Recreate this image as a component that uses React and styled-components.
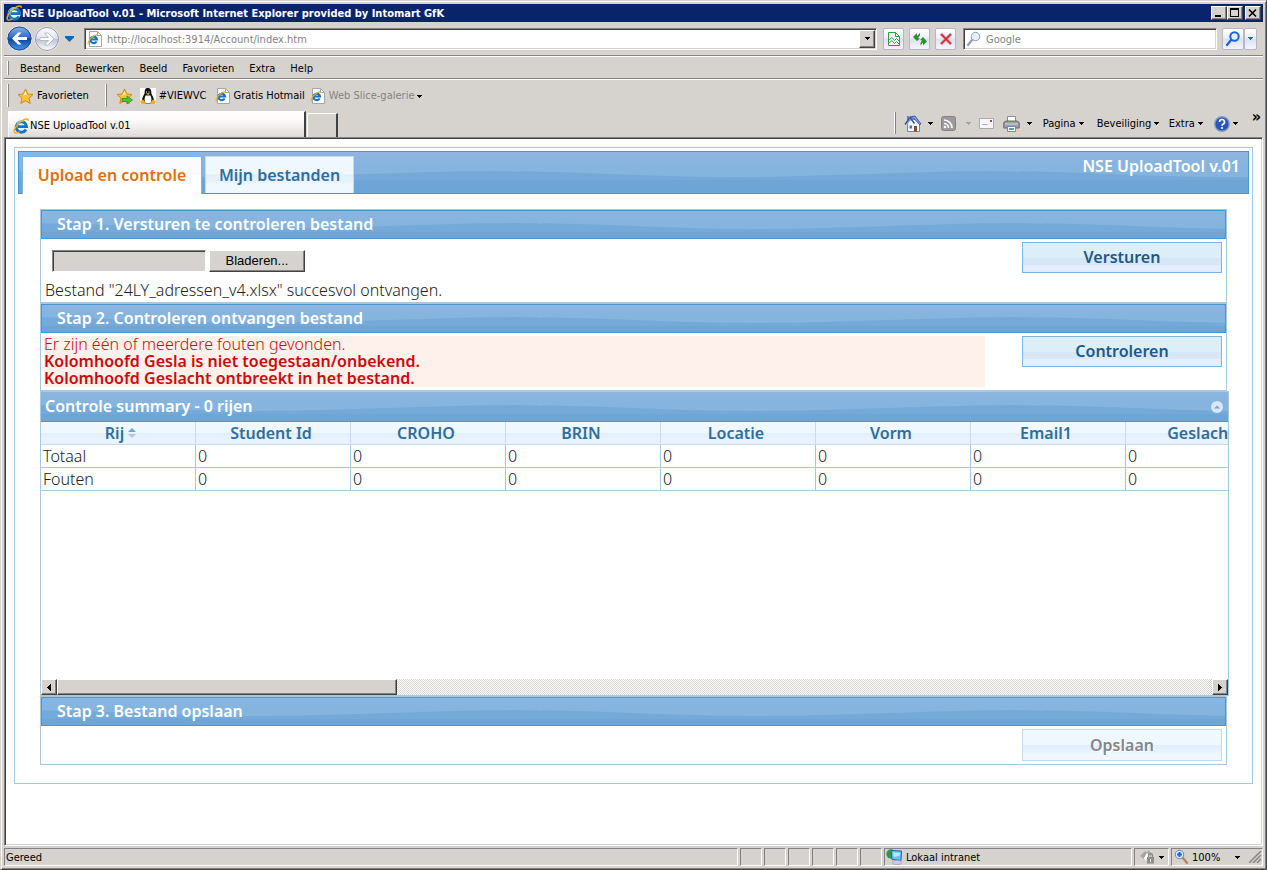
import React, { useState } from "react"
import styled, { createGlobalStyle, css } from "styled-components"

const colors = {
  face: '#d6d3ce',
  shadow: '#848284',
  dark: '#424142',
  title: '#08246b',
  muted: '#848284',
  line: '#a6c9e2',
  header: '#4297d7',
  tabLine: '#c5dbec',
  link: '#2e6e9e',
  active: '#e17009',
  error: '#cd0a0a',
  errorBg: '#fef1ec',
}

const uiFont = '"DejaVu Sans Condensed", "Noto Sans", sans-serif'
const pageFont = '"Noto Sans", "Open Sans", sans-serif'

const waveSvg = `<svg xmlns='http://www.w3.org/2000/svg' width='500' height='60'><path d='M-26 28C60 28 130 34 215 34S390 28 474 28Q490 28 500 29V60H-26Z' fill='%2375aad8'/><path d='M0 37h500v23H0z' fill='%236ca5d6'/></svg>`

const wave = css`
  background:
    url("data:image/svg+xml,${waveSvg}") 0 50% repeat-x,
    linear-gradient(#8fb4df, #85b5de 30%);
`

const raised = css`
  background: ${colors.face};
  border: 1px solid;
  border-color: #fff ${colors.dark} ${colors.dark} #fff;
  box-shadow: inset -1px -1px ${colors.shadow};
`

const sunken = css`
  border: 1px solid;
  border-color: ${colors.shadow} #fff #fff ${colors.shadow};
  box-shadow: inset 1px 1px ${colors.dark}, inset -1px -1px ${colors.face};
`

const GlobalStyle = createGlobalStyle`
  * {
    box-sizing: border-box;
  }
  body {
    margin: 0;
    background: ${colors.face};
  }
  button, input {
    font: inherit;
    color: inherit;
    border-radius: 0;
  }
  button {
    padding: 0;
    border: 0;
    background: none;
  }
  svg {
    display: block;
    flex: none;
  }
`

/* ---------- window ---------- */

const Window = styled.div`
  display: flex;
  flex-direction: column;
  min-height: 100vh;
  padding: 3px;
  font: 11px/14px ${uiFont};
  color: #000;
  background: ${colors.face};
  border: 1px solid;
  border-color: ${colors.face} ${colors.dark} ${colors.dark} ${colors.face};
  box-shadow: inset 1px 1px #fff, inset -1px -1px ${colors.shadow};
`

const TitleBar = styled.header`
  display: flex;
  align-items: center;
  height: 18px;
  padding: 0 2px;
  background: ${colors.title};
  color: #fff;
`

const Title = styled.h1`
  flex: 1;
  margin: 0;
  padding-top: 2px;
  font: bold 11px/14px ${uiFont};
  white-space: nowrap;
`

const WindowButton = styled.button`
  ${raised};
  display: flex;
  align-items: center;
  justify-content: center;
  width: 16px;
  height: 14px;
  margin-left: ${props => props.$apart ? '2px' : 0};
`

const NavRow = styled.div`
  display: flex;
  align-items: center;
  height: 34px;
  padding: 0 6px 0 2px;
  border-bottom: 1px solid ${colors.shadow};
`

const PlainButton = styled.button`
  display: flex;
  align-items: center;
  justify-content: center;
  width: ${props => props.$width}px;
  height: 22px;
`

const Travel = styled.div`
  display: flex;
  align-items: center;
  width: 78px;
`

const Field = styled.label`
  ${sunken};
  display: flex;
  align-items: center;
  height: 22px;
  padding: 0 1px 0 2px;
  gap: 4px;
  background: #fff;
  color: ${colors.muted};
  flex: ${props => props.$width ? `0 0 ${props.$width}px` : 1};

  input {
    flex: 1;
    min-width: 0;
    padding: 2px 0 0;
    border: 0;
    outline: 0;
    background: none;
  }
`

const DropButton = styled.button`
  ${raised};
  display: flex;
  align-items: center;
  justify-content: center;
  width: 16px;
  height: 18px;
`

const NavButtons = styled.div`
  display: flex;
  gap: 5px;
  margin: 0 7px 0 6px;
`

const GlossButton = styled.button`
  display: flex;
  align-items: center;
  justify-content: center;
  width: ${props => props.$width}px;
  height: 22px;
  border: 1px solid #b5b6ce;
  border-radius: 2px;
  background: linear-gradient(#fff, #eef0fa 45%, #dde0f0 50%, #f4f5fc);

  & + &[data-joined] {
    border-left: 0;
  }
`

const SearchGo = styled.div`
  display: flex;
  margin-left: 5px;
`

const MenuBar = styled.nav`
  display: flex;
  align-items: center;
  height: 23px;
  padding: 2px 3px 0;
  gap: 15px;
  border-top: 1px solid #fff;
  border-bottom: 1px solid ${colors.shadow};
`

const MenuItem = styled.button`
  white-space: nowrap;
`

const Grip = styled.span`
  align-self: stretch;
  width: 2px;
  margin: 2px ${props => props.$space}px 3px 0;
  border-right: 1px solid ${colors.shadow};
  border-left: 1px solid #fff;
`

const FavoritesBar = styled.div`
  display: flex;
  align-items: center;
  height: 31px;
  padding: 2px 3px 0;
  border-top: 1px solid #fff;
`

const ToolLink = styled.a`
  display: flex;
  align-items: center;
  gap: ${props => props.$gap || 3}px;
  margin-right: ${props => props.$space || 8}px;
  color: ${props => props.$muted ? colors.muted : '#000'};
  text-decoration: none;
  white-space: nowrap;
`

const TabRow = styled.div`
  display: flex;
  align-items: flex-end;
  height: 27px;
  padding-left: 4px;
`

const BrowserTab = styled.button`
  display: flex;
  align-items: center;
  gap: 1px;
  width: 298px;
  height: 26px;
  padding: 2px 0 0 4px;
  border: solid;
  border-width: 1px 2px 0 1px;
  border-color: #fff ${colors.dark} #fff #fff;
  background: linear-gradient(#fff, #fbf7f7 40%, #dedad7);
`

const NewTab = styled.button`
  width: 31px;
  height: 24px;
  margin-left: 1px;
  border: solid;
  border-width: 1px 2px 0 1px;
  border-color: #fff ${colors.dark} #fff #fff;
`

const CommandBar = styled.div`
  display: flex;
  align-items: center;
  align-self: stretch;
  margin-left: auto;
  padding-right: 2px;
`

const Command = styled.button`
  display: flex;
  align-items: center;
  justify-content: ${props => props.$label ? 'flex-start' : 'space-between'};
  gap: 3px;
  width: ${props => props.$width}px;
  margin-right: ${props => props.$space}px;
  white-space: nowrap;
`

const More = styled.button`
  align-self: flex-start;
  font-size: 16px;
  font-weight: bold;
`

/* ---------- page ---------- */

const Viewport = styled.main`
  flex: 1;
  padding: 9px;
  background: #fff;
  border: 1px solid;
  border-color: ${colors.shadow} #fff #fff ${colors.shadow};
  box-shadow: inset 1px 1px ${colors.dark}, inset -1px -1px ${colors.face};
`

const Page = styled.div`
  padding: 3px 3px 18px;
  border: 1px solid ${colors.line};
  font: 300 16px/17px ${pageFont};
  color: #222;

  b {
    font-weight: 600;
  }
`

const PageHeader = styled.div`
  ${wave};
  display: flex;
  height: 43px;
  padding: 4px 8px 0 3px;
  gap: 3px;
  border: 1px solid ${colors.header};
`

const PageTab = styled.button`
  width: ${props => props.$width}px;
  height: ${props => props.$active ? 38 : 37}px;
  border: 1px solid ${props => props.$active ? '#79b7e7' : colors.tabLine};
  border-bottom: 0;
  background: ${props => props.$active
    ? 'linear-gradient(#fafaff 50%, #fff 50%)'
    : 'linear-gradient(#eff7ff 48%, #e2eefd 49%, #e8f3ff 70%, #f0f8ff 75%)'};
  color: ${props => props.$active ? colors.active : colors.link};
  font-weight: 600;
  white-space: nowrap;
`

const AppName = styled.div`
  margin-left: auto;
  padding-top: 2px;
  color: #fff;
  font-weight: 600;
`

const Steps = styled.div`
  margin: 15px 22px 0;
`

const Section = styled.section`
  border: 1px solid ${colors.line};
`

const StepTitle = styled.h2`
  ${wave};
  margin: 0;
  padding: 5px 15px;
  border: 1px solid ${colors.header};
  color: #fff;
  font: 600 16px/17px ${pageFont};
`

const StepBody = styled.div`
  display: grid;
  grid-template-columns: 1fr 200px;
  align-items: start;
  column-gap: 37px;
  min-height: ${props => props.$height}px;
  padding: 3px 4px 3px 3px;
`

const ActionButton = styled.button`
  height: 31px;
  border: 1px solid #79b7e7;
  background: linear-gradient(#dceef8 52%, #d6e6f6 53%, #d9e8f8 74%, #e4eefd 76%);
  color: #1d5987;
  font-weight: 600;

  &:disabled {
    height: 32px;
    border-color: ${colors.tabLine};
    background: linear-gradient(#eff7ff 50%, #e2edfd 51%, #e8f3ff 74%, #eff7ff 76%);
    color: #848689;
    text-shadow: 1px 1px #fff;
  }
`

const FilePicker = styled.div`
  display: flex;
  gap: 3px;
  margin: 8px 0 10px 8px;

  input {
    ${sunken};
    width: 154px;
    height: 22px;
    background: ${colors.face};
  }

  button {
    ${raised};
    width: 96px;
    height: 22px;
    color: #000;
    font: 13px/16px "Liberation Sans", sans-serif;
  }
`

const Status = styled.p`
  margin: 0 0 0 1px;
`

const Errors = styled.div`
  background: ${colors.errorBg};
  color: ${colors.error};

  p {
    margin: 0;
  }
`

const Grid = styled.div`
  margin-right: -2px;
  border: 1px solid ${colors.line};
`

const GridTitle = styled.div`
  ${wave};
  display: flex;
  align-items: center;
  justify-content: space-between;
  height: 30px;
  padding: 0 5px 0 4px;
  border-bottom: 1px solid ${colors.header};
  color: #fff;
  font-weight: 600;
`

const GridBody = styled.div`
  height: 257px;
  overflow: hidden;
`

const Table = styled.table`
  table-layout: fixed;
  width: ${props => props.$columns * 155}px;
  border-collapse: separate;
  border-spacing: 0;

  th {
    height: 23px;
    padding: 0 4px 0 0;
    border: solid ${colors.tabLine};
    border-width: 0 1px 1px 0;
    background: linear-gradient(#eff7ff 48%, #e0edfd 49%, #e8f3ff 72%);
    color: ${colors.link};
    font-weight: 600;
  }

  td {
    height: 23px;
    padding: 0 2px;
    border: solid ${colors.line};
    border-width: 0 1px 1px 0;
  }
`

const Sortable = styled.span`
  display: inline-flex;
  align-items: center;
  gap: 4px;
  padding-left: 9px;
`

const ScrollBar = styled.div`
  display: flex;
  height: 16px;
  background: repeating-conic-gradient(#fff 0 25%, ${colors.face} 0 50%) 0 0 / 2px 2px;

  button {
    ${raised};
    display: flex;
    align-items: center;
    justify-content: center;
    width: 16px;
  }
`

const Thumb = styled.div`
  ${raised};
  width: 340px;
  margin-right: auto;
`

/* ---------- status bar ---------- */

const StatusBar = styled.footer`
  display: flex;
  gap: 2px;
  height: 20px;
  padding-top: 2px;
`

const Cell = styled.div`
  display: flex;
  align-items: center;
  flex: ${props => props.$width ? `0 0 ${props.$width}px` : 1};
  padding: ${props => props.$pad ? '0 4px' : '0 1px'};
  gap: 3px;
  justify-content: ${props => props.$spread ? 'space-between' : 'flex-start'};
  border: 1px solid;
  border-color: ${colors.shadow} #fff #fff ${colors.shadow};
  white-space: nowrap;
`

const CellText = styled.span`
  flex: 1;
  padding-top: 2px;
`

/* ---------- icons ---------- */

const Arrow = ({ color = '#000', size = 5 }) => (
  <svg width={size} height="3" viewBox="0 0 5 3" preserveAspectRatio="none" shapeRendering="crispEdges">
    <path d="M0 0h5L2.5 3z" fill={color} />
  </svg>
)

const Explorer = () => (
  <svg width="16" height="16" viewBox="0 0 16 16" fill="none">
    <circle cx="8.200" cy="8.500" r="6.500" fill="#eaf6ff" />
    <path d="M13 11.500A5.200 5.200 0 1 1 13.600 8.600H5" stroke="#1173c7" strokeWidth="2.800" />
    <path d="M4 6.500A4.500 4.500 0 0 1 10.500 3.500" stroke="#7dd0fa" strokeWidth="1.200" />
    <path d="M2 15C-.5 13 3 7 8 3.500 12 .8 15.500 0 15.300 2.800M2 15c1.500.5 3-.3 4.500-1.200" stroke="#efaa1c" strokeWidth="1.500" />
  </svg>
)

const ExplorerPage = () => (
  <svg width="16" height="16" viewBox="0 0 16 16" fill="none">
    <path d="M2.500.5h8l4 4v11h-12z" fill="#fff" stroke="#a4a5ad" />
    <path d="M10.500.5v4h4" stroke="#a4a5ad" />
    <path d="M9.600 10.500A3.300 3.300 0 1 1 10 8.500H4.500" stroke="#1173c7" strokeWidth="2.200" />
    <path d="M1.500 13.500C0 12 3 7.500 6 5.500 9 3.500 11 3.500 10.500 5" stroke="#efaa1c" strokeWidth="1.200" />
  </svg>
)

const BackIcon = () => (
  <svg width="27" height="27" viewBox="0 0 27 27">
    <defs>
      <linearGradient id="back" x2="0" y2="1">
        <stop offset="0" stopColor="#8fb8ea" />
        <stop offset=".48" stopColor="#2b66bf" />
        <stop offset=".52" stopColor="#0d429b" />
        <stop offset="1" stopColor="#4aa0ee" />
      </linearGradient>
    </defs>
    <circle cx="13.500" cy="13.500" r="12.500" fill="url(#back)" stroke="#e9edf6" />
    <circle cx="13.500" cy="13.500" r="11.500" fill="none" stroke="#26498e" />
    <path d="M6 13.500l6-6h3.500l-4 4.500H21v3h-9.500l4 4.500H12z" fill="#fff" />
  </svg>
)

const ForwardIcon = () => (
  <svg width="26" height="26" viewBox="0 0 26 26">
    <defs>
      <linearGradient id="forward" x2="0" y2="1">
        <stop offset="0" stopColor="#fff" />
        <stop offset=".48" stopColor="#dfe3ec" />
        <stop offset=".52" stopColor="#b9c1d2" />
        <stop offset="1" stopColor="#fff" />
      </linearGradient>
    </defs>
    <circle cx="13" cy="13" r="12.500" fill="#eceef3" />
    <circle cx="13" cy="13" r="11.500" fill="url(#forward)" stroke="#8f98a8" />
    <path d="M20 13l-6 6h-3.500l4-4.500H6v-3h8.500l-4-4.500H14z" fill="#fff" stroke="#a9b0bd" strokeWidth=".8" />
  </svg>
)

const CompatIcon = () => (
  <svg width="14" height="16" viewBox="0 0 14 16" fill="none" stroke="#2f9c3b">
    <path d="M1.500 1.500h7l4 4v9h-11z" fill="#fff" />
    <path d="M8.500 1.500v4h4M2 9l3-2.500 2.500 3 2-2 2.500 2.500M2 12l3-2.500 2.500 3 2-2 2.500 2.500" />
  </svg>
)

const RefreshIcon = () => (
  <svg width="16" height="16" viewBox="0 0 16 16" fill="#2b8f33">
    <path d="M1 6l4-4v3l3-3v2.500L6 7l2 .5L5 10z" />
    <path d="M15 10.500l-4 4v-3l-2.500 3V12l1.500-2.500-2-.5 3-3z" />
  </svg>
)

const StopIcon = () => (
  <svg width="14" height="14" viewBox="0 0 14 14" fill="none">
    <path d="M2 2l10 10M12 2L2 12" stroke="#e5898d" strokeWidth="3" />
    <path d="M2 2l10 10M12 2L2 12" stroke="#cf2b34" strokeWidth="1.600" />
  </svg>
)

const Lens = ({ color = '#8f9db5', flip }) => (
  <svg width="16" height="16" viewBox="0 0 16 16" fill="none">
    <g transform={flip ? 'matrix(-1 0 0 1 16 0)' : undefined}>
      <path d="M2 14l4-5" stroke={flip ? '#b3874f' : color} strokeWidth="2.200" strokeLinecap="round" />
      <circle cx="9.500" cy="5.500" r="4.200" fill="#e3f1fd" stroke={color} strokeWidth={color === '#1b5fe0' ? 2 : 1} />
      {flip && <path d="M7 5.500h5M9.500 3v5" stroke="#1b5fe0" strokeWidth="2" />}
    </g>
  </svg>
)

const Star = ({ add }) => (
  <svg width="17" height="17" viewBox="0 0 17 17">
    <path d="M8.500 1l2.300 5 5.200.5-4 3.600 1.200 5.400-4.700-2.800-4.700 2.800L5 10.100 1 6.500 6.200 6z" fill="#fcc23a" stroke="#d58a17" />
    <path d="M8.500 3l1.400 3.600-4 .8z" fill="#fff0a8" />
    {add && <path d="M6 10.500h5V8l5.500 4-5.500 4v-2.500H6z" fill="#4cc436" stroke="#1f8a1b" strokeWidth=".7" />}
  </svg>
)

const Tux = () => (
  <svg width="16" height="16" viewBox="0 0 16 16">
    <path d="M0 0h16v16H0z" fill="#fff" />
    <path d="M8 0C5 0 4.500 2 4.700 5 3.500 8 2.300 9 2 12l2 3.500h8l2-3.500c-.5-3-2-4.500-2.700-7C11.500 2 10.500 0 8 0z" fill="#111" />
    <path d="M5.500 7.500h5c1.500 3 1 5.500 0 7.500h-5c-1-2-1.500-4.500 0-7.500z" fill="#fff" />
    <path d="M6 3.500h1v1H6zM8.500 3.500h1v1h-1z" fill="#fff" />
    <path d="M6 5.300h4L8 7.200zM0 13l3-1.500L6 15l-1 1H1zM16 13l-3-1.500-3 3.500 1 1h4z" fill="#eeb31b" />
  </svg>
)

const Home = () => (
  <svg width="18" height="17" viewBox="0 0 18 17">
    <path d="M3.500 8.500L6 5l5-1 4.500 5v7.500h-12z" fill="#f5f3f0" stroke="#7e8596" />
    <path d="M3 1h2v4H3z" fill="#6a7fb8" />
    <path d="M6 2l5-1 6 8-1.500.5L10.500 4z" fill="#7fa4e8" stroke="#17377d" strokeWidth=".7" />
    <path d="M1 9.500L6 2.500l4.500 6" fill="none" stroke="#2f52b2" strokeWidth="1.400" />
    <path d="M10 11h3v5.500h-3z" fill="#7e4b2b" />
    <path d="M5.500 10.500H8v3H5.500z" fill="#3c74d8" />
  </svg>
)

const Feed = () => (
  <svg width="15" height="15" viewBox="0 0 15 15" fill="none">
    <rect x=".5" y=".5" width="14" height="14" rx="2" fill="#9c9a9c" stroke="#848284" />
    <path d="M3 7.500a4.500 4.500 0 0 1 4.500 4.500M3 4a8 8 0 0 1 8 8" stroke="#fff" strokeWidth="1.600" />
    <circle cx="4" cy="11" r="1.300" fill="#fff" />
  </svg>
)

const Mail = () => (
  <svg width="15" height="11" viewBox="0 0 15 11">
    <path d="M.5.5h14v10H.5z" fill="#f8f8fa" stroke="#a9a9b3" />
    <path d="M11 2h2v2h-2z" fill="#e03030" />
    <path d="M3.500 6.500h5" stroke="#a9a9b3" />
  </svg>
)

const Printer = () => (
  <svg width="17" height="16" viewBox="0 0 17 16">
    <path d="M4.500.5h8v6h-8z" fill="#fff" stroke="#8d8d92" />
    <path d="M.8 6.500L3 5h11l2.200 1.500V12H.8z" fill="#9d9da4" stroke="#66666e" />
    <path d="M2 8h13" stroke="#dcdce0" />
    <path d="M4.500 10.500h8v5h-8z" fill="#fff" stroke="#6f8fae" />
    <path d="M6 13h5" stroke="#4aa6c8" strokeWidth="2" />
  </svg>
)

const Help = () => (
  <svg width="16" height="16" viewBox="0 0 16 16" fill="none">
    <circle cx="8" cy="8" r="7.300" fill="#2857b8" stroke="#8a9cc4" strokeWidth="1.400" />
    <path d="M5.500 6a2.500 2.500 0 1 1 3.500 2.300q-1 .5-1 1.500" stroke="#fff" strokeWidth="1.700" />
    <circle cx="8" cy="12" r="1.100" fill="#fff" />
  </svg>
)

const Zone = () => (
  <svg width="17" height="16" viewBox="0 0 17 16">
    <circle cx="5" cy="5" r="4.700" fill="#2c9a4b" />
    <path d="M5 1.500l10.500.5-.5 9.500-9-1z" fill="#5fc4f5" stroke="#2a5fb5" />
    <path d="M7 3.500l7 .2-.3 3L8 8z" fill="#b9e8ff" />
    <ellipse cx="11" cy="13.500" rx="4.500" ry="2.200" fill="#c9cde4" stroke="#8a90b8" strokeWidth=".6" />
  </svg>
)

const Shield = () => (
  <svg width="17" height="16" viewBox="0 0 17 16">
    <path d="M1 7l5-5 3 2-4 6zM9 1l4 4-2 4-3-3z" fill="#a6a6a6" />
    <path d="M8 4l3 3-4 5-2-3z" fill="#fff" />
    <path d="M9.500 8V6.500a2 2 0 0 1 4 0V8" fill="none" stroke="#8c8c8c" strokeWidth="1.300" />
    <path d="M8 8h7v6.500H8z" fill="#8c8c8c" />
    <path d="M11 10h1v3h-1z" fill="#fff" />
  </svg>
)

const SortIcon = () => (
  <svg width="8" height="10" viewBox="0 0 8 10">
    <path d="M4 0l4 4H0z" fill="#6da8d5" />
    <path d="M0 6h8L4 10z" fill="#a9cbe8" />
  </svg>
)

const CollapseIcon = () => (
  <svg width="12" height="12" viewBox="0 0 12 12">
    <circle cx="6" cy="6" r="6" fill="#dbe6f7" />
    <path d="M3 7.500l3-3 3 3z" fill="#6fa5d8" />
  </svg>
)

const SideArrow = ({ right }) => (
  <svg width="4" height="7" viewBox="0 0 4 7" shapeRendering="crispEdges">
    <path d={right ? 'M0 0l4 3.500L0 7z' : 'M4 0L0 3.500 4 7z'} />
  </svg>
)

const ResizeGrip = () => (
  <svg width="12" height="12" viewBox="0 0 12 12" stroke="#848284" strokeWidth="1.500">
    <path d="M0 12L12 0M4 12l8-8M8 12l4-4" />
  </svg>
)

const menus = ['Bestand', 'Bewerken', 'Beeld', 'Favorieten', 'Extra', 'Help']

const columns = ['Rij', 'Student Id', 'CROHO', 'BRIN', 'Locatie', 'Vorm', 'Email1', 'Geslacht']

const rows = [
  { name: 'Totaal', values: [0, 0, 0, 0, 0, 0, 0] },
  { name: 'Fouten', values: [0, 0, 0, 0, 0, 0, 0] },
]

const tabs = [
  { name: 'Upload en controle', width: 180 },
  { name: 'Mijn bestanden', width: 149 },
]

function BrowserChrome() {
  return (
    <>
      <TitleBar>
        <Explorer />
        <Title>NSE UploadTool v.01 - Microsoft Internet Explorer provided by Intomart GfK</Title>
        <WindowButton aria-label="Minimaliseren">
          <svg width="10" height="10" viewBox="0 0 10 10"><path d="M1 7h6v2H1z" /></svg>
        </WindowButton>
        <WindowButton aria-label="Maximaliseren">
          <svg width="10" height="10" viewBox="0 0 10 10"><path d="M0 0h9v9H0zM1 2v6h7V2z" fillRule="evenodd" /></svg>
        </WindowButton>
        <WindowButton aria-label="Sluiten" $apart>
          <svg width="10" height="10" viewBox="0 0 10 10"><path d="M1 1.500l7 7M8 1.500l-7 7" stroke="#000" strokeWidth="1.600" /></svg>
        </WindowButton>
      </TitleBar>
      <NavRow>
        <Travel>
          <PlainButton $width={27} aria-label="Terug"><BackIcon /></PlainButton>
          <PlainButton $width={28} aria-label="Vooruit"><ForwardIcon /></PlainButton>
          <PlainButton $width={17} aria-label="Recente pagina's">
            <svg width="9" height="6" viewBox="0 0 9 6"><path d="M0 0h9v1.500L4.500 6 0 1.500z" fill="#1769ae" /></svg>
          </PlainButton>
        </Travel>
        <Field>
          <ExplorerPage />
          <input aria-label="Adres" defaultValue="http://localhost:3914/Account/index.htm" />
          <DropButton aria-label="Adressen tonen"><Arrow size={7} /></DropButton>
        </Field>
        <NavButtons>
          <GlossButton $width={21} aria-label="Compatibiliteit"><CompatIcon /></GlossButton>
          <GlossButton $width={21} aria-label="Vernieuwen"><RefreshIcon /></GlossButton>
          <GlossButton $width={21} aria-label="Stoppen"><StopIcon /></GlossButton>
        </NavButtons>
        <Field $width={254}>
          <Lens />
          <input aria-label="Zoeken" defaultValue="Google" />
        </Field>
        <SearchGo>
          <GlossButton $width={22} aria-label="Zoeken"><Lens color="#1b5fe0" /></GlossButton>
          <GlossButton $width={13} data-joined aria-label="Zoekopties"><Arrow color="#1b5fe0" /></GlossButton>
        </SearchGo>
      </NavRow>
      <MenuBar>
        <Grip $space={-4} />
        {menus.map(menu => <MenuItem key={menu}>{menu}</MenuItem>)}
      </MenuBar>
      <FavoritesBar>
        <Grip $space={8} />
        <ToolLink href="#favorieten" $space={16}><Star />Favorieten</ToolLink>
        <Grip $space={9} />
        <ToolLink href="#toevoegen" aria-label="Toevoegen aan favorieten" $space={7}><Star add /></ToolLink>
        <ToolLink href="#viewvc"><Tux />#VIEWVC</ToolLink>
        <ToolLink href="#hotmail" $space={5}><ExplorerPage />Gratis Hotmail</ToolLink>
        <ToolLink href="#webslice" $muted><ExplorerPage />Web Slice-galerie <Arrow /></ToolLink>
      </FavoritesBar>
      <TabRow>
        <BrowserTab><Explorer />NSE UploadTool v.01</BrowserTab>
        <NewTab aria-label="Nieuw tabblad" />
        <CommandBar>
          <Grip $space={8} />
          <Command $width={29} $space={8} aria-label="Startpagina"><Home /><Arrow /></Command>
          <Command $width={30} $space={8} aria-label="Feeds"><Feed /><Arrow color="#a5a2a5" /></Command>
          <Command $width={15} $space={9} aria-label="E-mail lezen"><Mail /></Command>
          <Command $width={29} $space={11} aria-label="Afdrukken"><Printer /><Arrow /></Command>
          <Command $width={43} $space={11} $label>Pagina<Arrow /></Command>
          <Command $width={61} $space={11} $label>Beveiliging<Arrow /></Command>
          <Command $width={37} $space={8} $label>Extra<Arrow /></Command>
          <Command $width={23} $space={15} aria-label="Help"><Help /><Arrow /></Command>
          <More aria-label="Meer opdrachten">»</More>
        </CommandBar>
      </TabRow>
    </>
  )
}

function Summary() {
  return (
    <Grid>
      <GridTitle>
        Controle summary - 0 rijen
        <button aria-label="Inklappen"><CollapseIcon /></button>
      </GridTitle>
      <GridBody>
        <Table $columns={columns.length}>
          <thead>
            <tr>
              {columns.map((column, i) => (
                <th key={column} scope="col">
                  {i === 0 ? <Sortable>{column}<SortIcon /></Sortable> : column}
                </th>
              ))}
            </tr>
          </thead>
          <tbody>
            {rows.map(({ name, values }) => (
              <tr key={name}>
                <td>{name}</td>
                {values.map((value, i) => <td key={i}>{value}</td>)}
              </tr>
            ))}
          </tbody>
        </Table>
      </GridBody>
      <ScrollBar>
        <button aria-label="Naar links"><SideArrow /></button>
        <Thumb />
        <button aria-label="Naar rechts"><SideArrow right /></button>
      </ScrollBar>
    </Grid>
  )
}

export default function App() {
  const [tab, setTab] = useState(tabs[0].name)

  return (
    <Window>
      <GlobalStyle />
      <BrowserChrome />
      <Viewport>
        <Page>
          <PageHeader>
            {tabs.map(({ name, width }) => (
              <PageTab key={name} $width={width} $active={name === tab} onClick={() => setTab(name)}>{name}</PageTab>
            ))}
            <AppName>NSE UploadTool v.01</AppName>
          </PageHeader>
          <Steps>
            <Section>
              <StepTitle>Stap 1. Versturen te controleren bestand</StepTitle>
              <StepBody $height={63}>
                <div>
                  <FilePicker>
                    <input aria-label="Bestand" readOnly />
                    <button>Bladeren...</button>
                  </FilePicker>
                  <Status>Bestand "24LY_adressen_v4.xlsx" succesvol ontvangen.</Status>
                </div>
                <ActionButton>Versturen</ActionButton>
              </StepBody>
            </Section>
            <Section>
              <StepTitle>Stap 2. Controleren ontvangen bestand</StepTitle>
              <StepBody $height={57}>
                <Errors role="alert">
                  <p>Er zijn één of meerdere fouten gevonden.</p>
                  <p><b>Kolomhoofd Gesla is niet toegestaan/onbekend.</b></p>
                  <p><b>Kolomhoofd Geslacht ontbreekt in het bestand.</b></p>
                </Errors>
                <ActionButton>Controleren</ActionButton>
              </StepBody>
            </Section>
            <Summary />
            <Section>
              <StepTitle>Stap 3. Bestand opslaan</StepTitle>
              <StepBody $height={38}>
                <div />
                <ActionButton disabled>Opslaan</ActionButton>
              </StepBody>
            </Section>
          </Steps>
        </Page>
      </Viewport>
      <StatusBar>
        <Cell><CellText>Gereed</CellText></Cell>
        {[1, 2, 3, 4, 5, 6].map(n => <Cell key={n} $width={22} />)}
        <Cell $width={248}><Zone /><CellText>Lokaal intranet</CellText></Cell>
        <Cell $width={35} $pad $spread><Shield /><Arrow /></Cell>
        <Cell $width={92}>
          <Lens color="#6c87b0" flip />
          <CellText>100%</CellText>
          <Arrow />
          <span />
          <span />
          <ResizeGrip />
        </Cell>
      </StatusBar>
    </Window>
  )
}
